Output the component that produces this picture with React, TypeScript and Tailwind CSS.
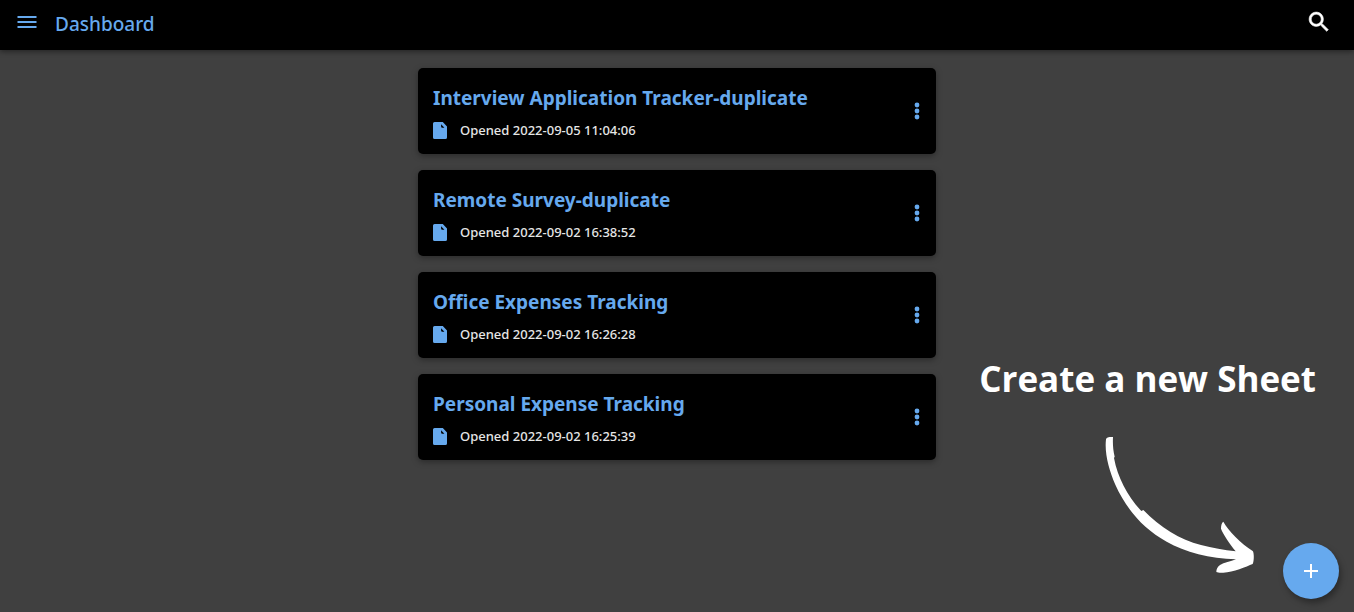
type Sheet = { name: string; opened: string };

const sheets: Sheet[] = [
  { name: 'Interview Application Tracker-duplicate', opened: '2022-09-05 11:04:06' },
  { name: 'Remote Survey-duplicate', opened: '2022-09-02 16:38:52' },
  { name: 'Office Expenses Tracking', opened: '2022-09-02 16:26:28' },
  { name: 'Personal Expense Tracking', opened: '2022-09-02 16:25:39' },
];

function DocumentIcon() {
  return (
    <svg viewBox="0 0 14 17" className="h-[17px] w-3.5 shrink-0" fill="currentColor" aria-hidden="true">
      <path
        fillRule="evenodd"
        d="M1.6 0H9.8L14 4.6V15.4A1.6 1.6 0 0 1 12.4 17H1.6A1.6 1.6 0 0 1 0 15.4V1.6A1.6 1.6 0 0 1 1.6 0ZM8.1 2.2V4.6A1.2 1.2 0 0 0 9.3 5.8H11.4Z"
      />
    </svg>
  );
}

function DotsIcon() {
  return (
    <svg viewBox="0 0 6 18" className="h-[18px] w-1.5" fill="currentColor" aria-hidden="true">
      <circle cx="3" cy="3" r="2.4" />
      <circle cx="3" cy="9" r="2.4" />
      <circle cx="3" cy="15" r="2.4" />
    </svg>
  );
}

function SheetCard({ sheet }: { sheet: Sheet }) {
  return (
    <li className="flex items-center justify-between rounded-[5px] bg-black pr-[11px] pl-[15px] shadow-[0_2px_6px_rgba(0,0,0,0.35)]">
      <div className="pt-4 pb-[13px]">
        <h2 className="text-[19px] leading-7 font-bold text-[#66a9ee]">{sheet.name}</h2>
        <p className="mt-[7px] flex h-[22px] items-center gap-[13px] text-[#66a9ee]">
          <DocumentIcon />
          <span className="text-[13px] leading-5 font-medium text-[#e6e6e6]">Opened {sheet.opened}</span>
        </p>
      </div>
      <button type="button" aria-label={`Options for ${sheet.name}`} className="flex w-4 justify-center text-[#66a9ee]">
        <DotsIcon />
      </button>
    </li>
  );
}

function CurvedArrow() {
  return (
    <svg viewBox="75 48 450 414" className="h-[138px] w-[150px]" fill="#fff" aria-hidden="true">
      <path d="M78 58C80 51 90 51 99 51C98 72 99 90 104 110L102 114C113 173 143 229 184 273L190 270C240 322 300 359 363 375C397 384 432 390 467 394C449 371 430 344 423 326C423 316 425 308 430 305C444 332 484 371 518 393C523 398 522 425 518 432C499 440 460 457 430 458C421 459 413 458 409 456C409 448 412 441 420 435C432 428 452 424 468 418C390 415 315 397 260 365C188 326 138 265 106 194C87 151 73 100 78 58Z" />
    </svg>
  );
}

export default function App() {
  return (
    <div className="relative flex min-h-screen flex-col bg-[#404040] font-['Noto_Sans','Open_Sans',sans-serif]">
      <header className="flex h-[50px] items-center justify-between bg-black pr-6 pl-[17px] shadow-[0_2px_5px_rgba(0,0,0,0.4)]">
        <div className="flex items-center gap-[18px] text-[#66a9ee]">
          <button type="button" aria-label="Open menu" className="mb-1.5">
            <svg viewBox="0 0 20 14" className="h-3.5 w-5" fill="currentColor" aria-hidden="true">
              <path d="M0.5 1h19v2h-19zM0.5 6h19v2h-19zM0.5 11h19v2h-19z" />
            </svg>
          </button>
          <h1 className="mb-0.5 text-[19px] leading-7 font-medium">Dashboard</h1>
        </div>
        <button type="button" aria-label="Search" className="mb-1.5 text-white">
          <svg viewBox="2 2 20 20" className="h-[22px] w-[22px]" fill="currentColor" stroke="currentColor" strokeWidth="0.5" aria-hidden="true">
            <path d="M15.5 14h-.79l-.28-.27C15.41 12.59 16 11.11 16 9.5 16 5.91 13.09 3 9.5 3S3 5.91 3 9.5 5.91 16 9.5 16c1.61 0 3.09-.59 4.23-1.57l.27.28v.79l5 4.99L20.49 19l-4.99-5zm-6 0C7.01 14 5 11.99 5 9.5S7.01 5 9.5 5 14 7.01 14 9.5 11.99 14 9.5 14z" />
          </svg>
        </button>
      </header>

      <main className="flex justify-center px-4 py-[18px]">
        <ul className="flex w-full max-w-[518px] flex-col gap-4">
          {sheets.map((sheet) => (
            <SheetCard key={sheet.name} sheet={sheet} />
          ))}
        </ul>
      </main>

      <div className="absolute right-[38px] bottom-[38px] flex flex-col items-end">
        <p className="font-['Open_Sans','Noto_Sans',sans-serif] text-[35px] leading-12 font-bold text-white">Create a new Sheet</p>
        <div className="mt-[33px] mr-[61px]">
          <CurvedArrow />
        </div>
      </div>
      <button
        type="button"
        aria-label="Create a new sheet"
        className="absolute right-[15px] bottom-[13px] flex size-14 items-center justify-center rounded-full bg-[#66a9ee] text-white shadow-[2px_4px_6px_rgba(0,0,0,0.35)]"
      >
        <svg viewBox="0 0 16 16" className="size-4" fill="currentColor" aria-hidden="true">
          <path d="M7 1h2v6h6v2H9v6H7V9H1V7h6z" />
        </svg>
      </button>
    </div>
  );
}
